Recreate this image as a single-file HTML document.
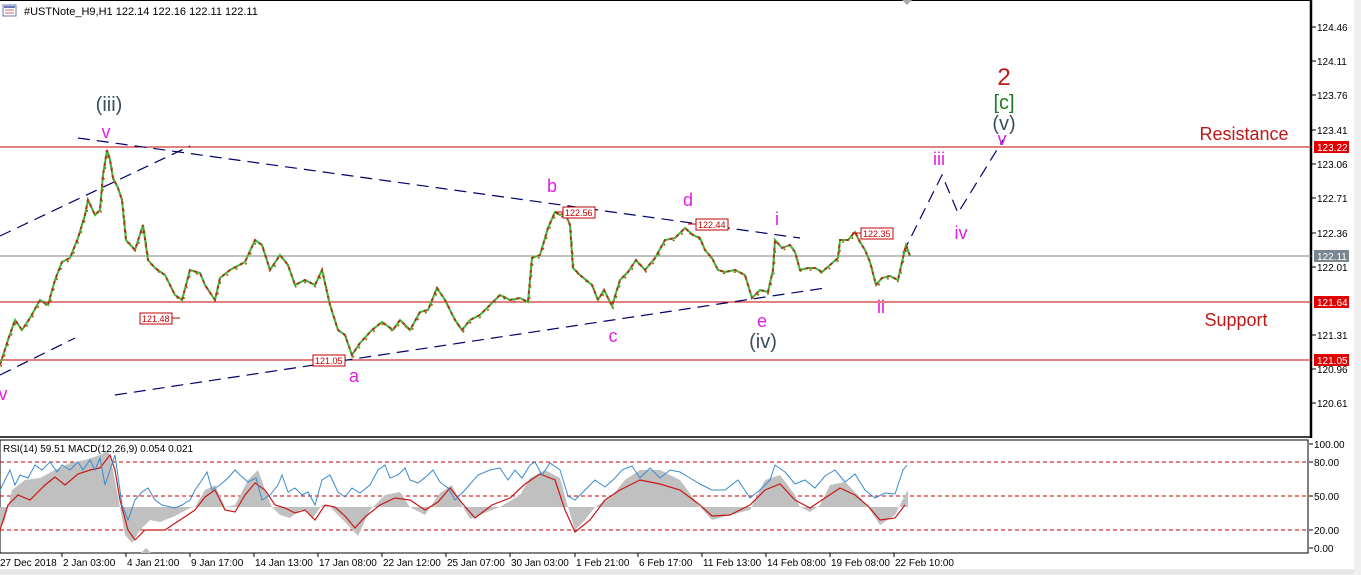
<!DOCTYPE html>
<html><head><meta charset="utf-8"><style>
html,body{margin:0;padding:0;background:#fff;width:1361px;height:575px;overflow:hidden}
svg{display:block}
text{font-family:"Liberation Sans",Tahoma,sans-serif}
</style></head><body>
<svg width="1361" height="575" viewBox="0 0 1361 575" xmlns="http://www.w3.org/2000/svg">
<defs>
<polyline id="px" fill="none" points="0,365 8,340 15,320 22,330 30,318 40,300 48,305 55,280 62,262 70,258 78,238 85,215 88,200 95,215 100,210 103,175 107,150 110,160 113,178 118,188 122,200 126,240 135,250 143,225 148,260 155,268 165,275 175,295 182,300 190,270 200,273 205,285 215,300 220,278 230,270 245,262 255,240 262,245 270,270 280,255 288,265 295,285 305,280 315,285 322,270 330,305 338,330 345,335 352,355 360,343 372,330 382,322 393,330 400,320 410,330 420,312 428,310 437,288 445,300 455,320 462,330 470,320 480,315 490,305 500,295 510,300 520,298 528,302 532,258 540,255 548,228 555,212 560,215 565,213 570,225 573,268 580,275 592,285 598,300 604,290 612,306 620,280 628,272 636,260 645,270 655,258 665,240 675,238 685,228 693,235 700,238 705,250 712,258 718,270 725,272 735,270 745,275 752,298 760,290 768,292 773,270 775,240 782,248 790,245 795,252 800,270 808,268 815,268 822,272 830,265 838,258 840,240 848,240 855,232 860,242 865,250 870,262 876,285 882,278 890,276 898,280 902,262 906,245 910,256"/>
</defs>
<rect x="0" y="0" width="1361" height="575" fill="#fff"/>
<rect x="0" y="569" width="1361" height="6" fill="#e8e8e8"/>
<rect x="1354" y="0" width="7" height="575" fill="#f0f0f0"/>
<line x1="0" y1="0.5" x2="1311" y2="0.5" stroke="#000"/>
<line x1="1311" y1="0" x2="1311" y2="438" stroke="#000" stroke-width="2.5"/>
<line x1="0" y1="437" x2="1311" y2="437" stroke="#000" stroke-width="1.5"/>
<polygon points="902,0 912,0 907,5" fill="#aaa"/>
<rect x="3" y="5" width="13" height="11" fill="#fff" stroke="#6a7ab8"/>
<rect x="4" y="6" width="11" height="2" fill="#6a7ab8"/>
<line x1="5" y1="10" x2="14" y2="10" stroke="#d66"/><line x1="5" y1="13" x2="14" y2="13" stroke="#d66"/>
<text x="24" y="15" font-size="11" fill="#000">#USTNote_H9,H1  122.14 122.16 122.11 122.11</text>
<line x1="0" y1="147" x2="1311" y2="147" stroke="#c00000"/>
<line x1="0" y1="256" x2="1311" y2="256" stroke="#808080"/>
<line x1="0" y1="302" x2="1311" y2="302" stroke="#c00000"/>
<line x1="0" y1="360" x2="1311" y2="360" stroke="#c00000"/>
<g stroke="#00006e" stroke-width="1.2" stroke-dasharray="12,7" fill="none">
<line x1="78" y1="138" x2="800" y2="238"/>
<line x1="0" y1="236" x2="190" y2="146"/>
<line x1="0" y1="375" x2="75" y2="338"/>
<line x1="115" y1="395" x2="825" y2="288"/>
<polyline points="903,253 942,175 958,213 1003,140"/>
</g>
<use href="#px" stroke="#3cb83c" stroke-width="2"/>
<use href="#px" stroke="#b03010" stroke-width="2" stroke-dasharray="3,4"/>
<use href="#px" stroke="#8a6a10" stroke-width="1.5" stroke-dasharray="2,9" transform="translate(1,2)"/>
<g font-size="9" fill="#c00000">
<rect x="140" y="313" width="32" height="11" fill="#fff" stroke="#c00000"/><text x="142" y="322">121.48</text>
<line x1="172" y1="318" x2="180" y2="318" stroke="#c00000"/>
<rect x="313" y="355" width="32" height="11" fill="#fff" stroke="#c00000"/><text x="315" y="364">121.05</text>
<rect x="563" y="207" width="32" height="11" fill="#fff" stroke="#c00000"/><text x="565" y="216">122.56</text>
<line x1="555" y1="212" x2="563" y2="212" stroke="#c00000"/>
<rect x="696" y="219" width="32" height="11" fill="#fff" stroke="#c00000"/><text x="698" y="228">122.44</text>
<line x1="688" y1="224" x2="696" y2="224" stroke="#c00000"/>
<rect x="861" y="228" width="32" height="11" fill="#fff" stroke="#c00000"/><text x="863" y="237">122.35</text>
<line x1="852" y1="233" x2="861" y2="233" stroke="#c00000"/>
</g>
<g font-size="18" fill="#e020e0" text-anchor="middle">
<text x="106" y="138">v</text>
<text x="3" y="400">v</text>
<text x="354" y="382">a</text>
<text x="552" y="192">b</text>
<text x="613" y="342">c</text>
<text x="688" y="206">d</text>
<text x="762" y="327">e</text>
<text x="777" y="225">i</text>
<text x="881" y="313">ii</text>
<text x="939" y="165">iii</text>
<text x="961" y="239">iv</text>
<text x="1002" y="145">v</text>
</g>
<g font-size="20" fill="#3c4e5c" text-anchor="middle">
<text x="109" y="111">(iii)</text>
<text x="763" y="348">(iv)</text>
<text x="1004" y="130">(v)</text>
</g>
<text x="1004" y="109" font-size="20" fill="#1e7a1e" text-anchor="middle">[c]</text>
<text x="1004" y="85" font-size="24" fill="#c01818" text-anchor="middle">2</text>
<text x="1244" y="140" font-size="18" fill="#c01818" text-anchor="middle">Resistance</text>
<text x="1236" y="326" font-size="18" fill="#c01818" text-anchor="middle">Support</text>
<g font-size="10" fill="#000">
<g stroke="#000"><line x1="1312" y1="27" x2="1316" y2="27"/><line x1="1312" y1="61" x2="1316" y2="61"/><line x1="1312" y1="95" x2="1316" y2="95"/><line x1="1312" y1="130" x2="1316" y2="130"/><line x1="1312" y1="164" x2="1316" y2="164"/><line x1="1312" y1="198" x2="1316" y2="198"/><line x1="1312" y1="233" x2="1316" y2="233"/><line x1="1312" y1="267" x2="1316" y2="267"/><line x1="1312" y1="335" x2="1316" y2="335"/><line x1="1312" y1="369" x2="1316" y2="369"/><line x1="1312" y1="403" x2="1316" y2="403"/></g>
<text x="1317" y="31">124.46</text><text x="1317" y="65">124.11</text><text x="1317" y="99">123.76</text><text x="1317" y="134">123.41</text>
<text x="1317" y="168">123.06</text><text x="1317" y="202">122.71</text><text x="1317" y="237">122.36</text><text x="1317" y="271">122.01</text>
<text x="1317" y="339">121.31</text><text x="1317" y="373">120.96</text><text x="1317" y="407">120.61</text>
<rect x="1314" y="141" width="35" height="12" fill="#e00000"/><text x="1317" y="151" fill="#fff">123.22</text>
<rect x="1314" y="250" width="35" height="12" fill="#7a8590"/><text x="1317" y="260" fill="#fff">122.11</text>
<rect x="1314" y="296" width="35" height="12" fill="#e00000"/><text x="1317" y="306" fill="#fff">121.64</text>
<rect x="1314" y="354" width="35" height="12" fill="#e00000"/><text x="1317" y="364" fill="#fff">121.05</text>
</g>
<rect x="0" y="440" width="1308" height="113" fill="none" stroke="#000"/>
<g stroke="#c00000" stroke-dasharray="4,3"><line x1="0" y1="462" x2="1308" y2="462"/><line x1="0" y1="496" x2="1308" y2="496"/><line x1="0" y1="530" x2="1308" y2="530"/></g>
<polygon fill="#c0c0c0" points="0,507 0,530 5,520 12,490 25,480 40,478 55,470 70,463 85,460 100,455 108,450 113,470 120,507 125,535 132,543 140,530 150,520 160,522 175,516 190,508 195,507 205,490 215,485 225,507 235,505 248,480 258,470 268,498 272,507 280,515 290,518 300,510 306,510 312,519 322,505 330,507 345,522 358,536 370,510 385,495 400,492 410,507 425,515 440,493 452,485 463,507 470,519 482,514 500,507 520,495 530,478 545,470 560,478 568,507 575,530 585,520 595,507 610,498 625,480 640,470 660,470 680,480 700,507 712,520 730,515 750,510 765,480 780,475 795,495 800,507 810,512 820,505 830,485 845,482 858,495 868,507 880,525 895,515 905,495 908,490 908,507"/>
<polyline fill="none" stroke="#c81818" stroke-width="1.2" points="0,530 8,505 18,495 30,500 45,485 55,477 65,485 78,474 90,470 100,468 110,455 115,470 120,500 128,530 135,540 145,530 152,530 165,530 180,520 195,510 205,497 215,490 225,510 235,512 245,495 255,483 265,490 275,505 285,508 295,513 305,510 315,520 325,505 335,507 345,516 355,528 365,517 380,505 395,498 410,500 425,510 438,502 450,488 462,503 475,518 492,505 510,498 525,484 540,474 555,480 565,510 575,532 590,520 605,500 620,490 640,480 660,484 680,490 700,505 712,516 730,515 750,505 765,490 780,484 795,500 810,508 825,498 840,488 855,495 868,506 880,520 895,518 905,505"/>
<polyline fill="none" stroke="#3a8ad0" stroke-width="1" points="0,490 5,480 10,470 15,485 20,475 28,478 35,465 42,470 50,462 57,472 62,465 70,470 78,462 83,470 90,460 95,470 100,458 105,485 110,470 115,455 122,505 128,520 135,500 142,492 148,488 155,500 162,505 175,508 182,505 190,500 195,490 202,480 207,472 212,490 220,485 228,478 235,470 240,475 248,482 256,478 262,500 270,495 278,485 282,475 288,492 295,488 302,495 308,492 315,505 322,480 330,475 338,492 345,497 352,488 360,493 370,485 378,470 385,465 390,478 398,475 405,468 410,480 418,483 428,475 433,470 440,482 448,488 455,500 465,490 478,475 490,470 500,468 508,480 515,470 522,478 530,465 535,462 542,475 550,463 560,470 568,496 575,500 585,490 595,480 605,487 615,478 622,470 632,466 640,478 650,468 660,478 670,470 680,472 690,478 700,484 712,490 725,490 738,480 750,498 760,490 770,480 775,465 785,472 795,484 805,480 815,488 825,476 835,470 845,482 855,474 865,490 875,498 885,493 895,494 903,470 907,465"/>
<text x="3" y="452" font-size="10" fill="#000">RSI(14) 59.51 MACD(12,26,9) 0.054 0.021</text>
<polygon points="141,553 151,553 146,548" fill="#bbb"/>
<g font-size="10" fill="#000">
<g stroke="#000"><line x1="1309" y1="444" x2="1313" y2="444"/><line x1="1309" y1="462" x2="1313" y2="462"/><line x1="1309" y1="496" x2="1313" y2="496"/><line x1="1309" y1="530" x2="1313" y2="530"/><line x1="1309" y1="548" x2="1313" y2="548"/></g>
<text x="1314" y="448">100.00</text><text x="1314" y="466">80.00</text><text x="1314" y="500">50.00</text><text x="1314" y="534">20.00</text><text x="1314" y="552">0.00</text>
</g>
<g font-size="10" fill="#000">
<g stroke="#000"><line x1="62" y1="553" x2="62" y2="557"/><line x1="126" y1="553" x2="126" y2="557"/><line x1="190" y1="553" x2="190" y2="557"/><line x1="254" y1="553" x2="254" y2="557"/><line x1="318" y1="553" x2="318" y2="557"/><line x1="382" y1="553" x2="382" y2="557"/><line x1="446" y1="553" x2="446" y2="557"/><line x1="510" y1="553" x2="510" y2="557"/><line x1="575" y1="553" x2="575" y2="557"/><line x1="638" y1="553" x2="638" y2="557"/><line x1="702" y1="553" x2="702" y2="557"/><line x1="766" y1="553" x2="766" y2="557"/><line x1="830" y1="553" x2="830" y2="557"/><line x1="894" y1="553" x2="894" y2="557"/></g>
<text x="0" y="566">27 Dec 2018</text><text x="63" y="566">2 Jan 03:00</text><text x="127" y="566">4 Jan 21:00</text><text x="191" y="566">9 Jan 17:00</text>
<text x="255" y="566">14 Jan 13:00</text><text x="319" y="566">17 Jan 08:00</text><text x="383" y="566">22 Jan 12:00</text><text x="447" y="566">25 Jan 07:00</text>
<text x="511" y="566">30 Jan 03:00</text><text x="576" y="566">1 Feb 21:00</text><text x="639" y="566">6 Feb 17:00</text><text x="703" y="566">11 Feb 13:00</text>
<text x="767" y="566">14 Feb 08:00</text><text x="831" y="566">19 Feb 08:00</text><text x="895" y="566">22 Feb 10:00</text>
</g>
</svg>
</body></html>
